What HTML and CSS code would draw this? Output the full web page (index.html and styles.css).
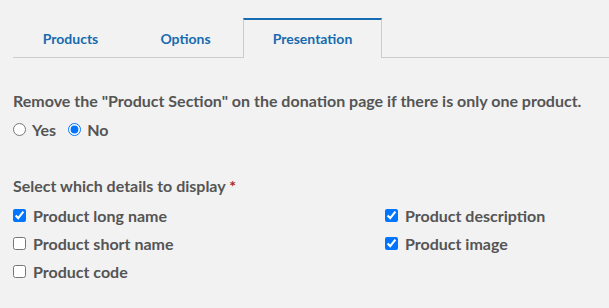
FILE: index.html
```html
<!DOCTYPE html>
<html>
<head>
  <title>Product settings</title>
  <link rel="stylesheet" href="styles.css">
</head>
<body>
  <div class="page">
    <!-- Tabs -->
    <ul class="tabs">
      <li class="tab tab-products">Products</li>
      <li class="tab tab-options">Options</li>
      <li class="tab tab-presentation active">Presentation</li>
    </ul>

    <!-- Product section -->
    <div class="field">
      <p class="question">Remove the "Product Section" on the donation page if there is only one product.</p>
      <div class="radios">
        <label class="choice"><input type="radio" name="hideSection" value="yes"> Yes</label>
        <label class="choice"><input type="radio" name="hideSection" value="no" checked> No</label>
      </div>
    </div>

    <!-- Details -->
    <div class="field details">
      <p class="question">Select which details to display <span class="required">*</span></p>
      <div class="checks">
        <label class="choice"><input type="checkbox" checked> Product long name</label>
        <label class="choice"><input type="checkbox" checked> Product description</label>
        <label class="choice"><input type="checkbox"> Product short name</label>
        <label class="choice"><input type="checkbox" checked> Product image</label>
        <label class="choice"><input type="checkbox"> Product code</label>
      </div>
    </div>
  </div>
</body>
</html>
```

FILE: styles.css
```css
body {
  font-family: Lato, "Open Sans", sans-serif;
  background-color: #f2f2f2;
  color: #555;
  margin: 0;
}

.page {
  padding: 18px 13px 0 13px;
}

.tabs {
  list-style: none;
  margin: 0;
  padding: 0;
  display: flex;
  border-bottom: 1px solid #ccc;
  margin-right: -13px;
}

.tab {
  height: 37px;
  line-height: 38px;
  text-align: center;
  font-weight: bold;
  font-size: 14px;
  color: #176bb0;
  border-top: 2px solid transparent;
}

.tab-products,
.tab-options {
  width: 115px;
}

.tab-presentation {
  width: 137px;
}

.tab.active {
  border-top: 2px solid #176bb0;
  border-left: 1px solid #ccc;
  border-right: 1px solid #ccc;
  background-color: #f2f2f2;
  height: 38px;
  margin-bottom: -1px;
}

.field {
  margin-top: 33px;
}

.question {
  margin: 0;
  font-size: 16px;
  font-weight: bold;
}

.required {
  color: #a4282c;
}

.radios {
  display: flex;
  gap: 12px;
  margin-top: 10px;
}

.choice {
  display: flex;
  align-items: center;
  gap: 7px;
  font-size: 16px;
  font-weight: bold;
}

.radios .choice {
  gap: 6px;
}

.choice input {
  margin: 0;
}

.details {
  margin-top: 37px;
}

.checks {
  display: grid;
  grid-template-columns: 372px 1fr;
  row-gap: 9px;
  margin-top: 11px;
}
```
